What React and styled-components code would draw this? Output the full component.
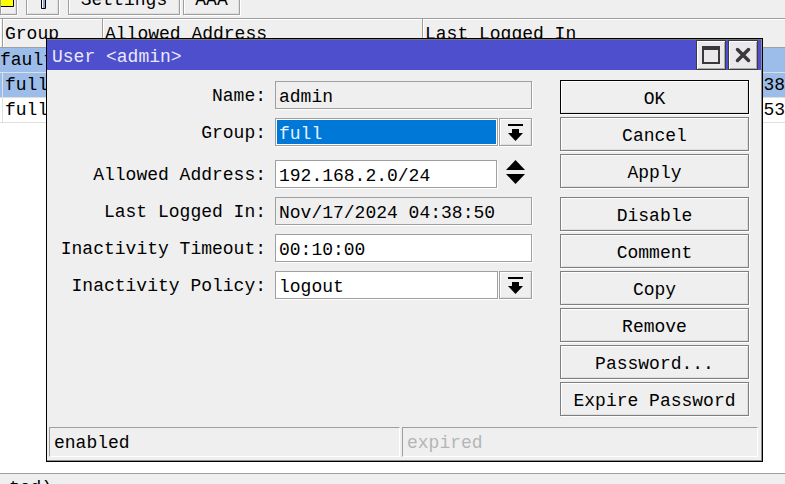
import React from "react";
import styled, { createGlobalStyle, css } from "styled-components";

const GlobalStyle = createGlobalStyle`
  * { box-sizing: border-box; }
  body { margin: 0; background: #fff; }
  body, button, input, select {
    font-family: NSimSun, "Liberation Mono", monospace;
    font-size: 18px;
    line-height: 24px;
    color: #000;
  }
`;

const raised = css`
  background: #efefef;
  border: 1px solid #9f9f9f;
  box-shadow: 1px 1px 0 #fff, inset 1px 1px 0 #fff, inset -1px -1px 0 #dfdfdf;
`;

const Desktop = styled.div`
  position: relative;
  height: 100vh;
  display: flex;
  flex-direction: column;
  overflow: hidden;
`;

const Toolbar = styled.div`
  display: flex;
  flex: none;
  align-items: flex-end;
  gap: 3px;
  height: 18px;
  padding-bottom: 3px;
  overflow: hidden;
  background: #efefef;
`;

const ToolButton = styled.button`
  ${raised}
  display: flex;
  flex: none;
  align-items: center;
  justify-content: center;
  width: ${(p) => p.$width}px;
  height: 34px;
  margin-right: ${(p) => p.$after || 0}px;
  padding: 3px 0 0;
`;

const UserTable = styled.table`
  width: 100%;
  table-layout: fixed;
  border-collapse: separate;
  border-spacing: 0;
  white-space: nowrap;
`;

const HeadCell = styled.th`
  height: 30px;
  padding: 2px 2px 0;
  overflow: hidden;
  text-align: left;
  font-weight: 400;
  background: #efefef;
  border-top: 1px solid #9f9f9f;
  border-bottom: 1px solid #9f9f9f;
  border-right: 1px solid #9f9f9f;
  box-shadow: inset 1px 1px 0 #fff;
  &:last-child { border-right: 0; }
`;

const Row = styled.tr`
  background: ${(p) => (p.$selected ? "#9cbde9" : "#fff")};
`;

const Cell = styled.td`
  height: 25px;
  padding: 0 ${(p) => (p.$end ? 0 : 2)}px;
  overflow: hidden;
  text-align: ${(p) => (p.$end ? "right" : "left")};
  border-bottom: 1px solid #dfdfdf;
  border-right: 1px solid #dfdfdf;
  &:last-child { border-right: 0; }
`;

const NoteCell = styled(Cell)`
  padding: 0;
`;

const TableArea = styled.main`
  flex: 1;
`;

const Footer = styled.footer`
  flex: none;
  height: 11px;
  padding: 2px 0 0 9px;
  overflow: hidden;
  background: #efefef;
  border-top: 1px solid #9f9f9f;
`;

const Dialog = styled.section`
  position: absolute;
  top: 38px;
  left: 46px;
  right: 22px;
  background: #efefef;
  border: 1px solid #000;
  box-shadow: inset -1px -1px 0 #8f8f8f;
`;

const TitleBar = styled.header`
  display: flex;
  align-items: center;
  gap: 2px;
  height: 31px;
  margin-right: 1px;
  padding: 0 3px 0 5px;
  background: #4e4fcd;
  border-top: 1px solid #777;
`;

const Title = styled.h1`
  flex: 1;
  margin: 0;
  padding-top: 4px;
  font-size: 18px;
  font-weight: 400;
  color: #e9e9fb;
`;

const TitleButton = styled.button`
  display: flex;
  align-items: center;
  justify-content: center;
  width: 30px;
  height: 30px;
  padding: 0;
  background: #ebe8eb;
  border: 1px solid #3c3c40;
  box-shadow: inset 1px 1px 0 #fff, inset -1px -1px 0 #aaa;
`;

const Body = styled.div`
  display: flex;
  align-items: flex-start;
  gap: 28px;
  padding: 10px 13px 11px 0;
`;

const Form = styled.form`
  flex: 1;
  min-width: 0;
  display: flex;
  flex-direction: column;
  gap: 9px;
  padding-top: 1px;
`;

const Field = styled.div`
  display: grid;
  grid-template-columns: 219px minmax(0, 1fr);
  column-gap: 9px;
  align-items: center;
  margin-bottom: ${(p) => p.$after || 0}px;
`;

const Label = styled.label`
  padding-top: 3px;
  line-height: 25px;
  text-align: right;
`;

const Controls = styled.div`
  display: flex;
  gap: ${(p) => p.$gap || 1}px;
`;

const box = css`
  flex: 1;
  min-width: 0;
  width: 100%;
  height: 28px;
  margin: 0;
  border: 1px solid #9f9f9f;
  border-radius: 0;
  box-shadow: 1px 1px 0 #fff;
  background: #fff;
  outline: 0;
`;

const TextBox = styled.input`
  ${box}
  padding: 3px 3px 0;
  &:read-only { background: #efefef; }
`;

const DropDown = styled.select`
  ${box}
  appearance: none;
  padding: 3px 3px 0;
  ${(p) =>
    p.$active &&
    css`
      color: #e6f3ff;
      background: #0078d7;
      box-shadow: inset 0 0 0 1px #fff, 1px 1px 0 #fff;
    `}
`;

const ArrowButton = styled.button`
  ${raised}
  display: flex;
  align-items: center;
  justify-content: center;
  width: 33px;
  height: 28px;
  padding: 0;
`;

const Spinner = styled.button`
  display: flex;
  width: 26px;
  height: 24px;
  padding: 0;
  border: 0;
  background: none;
`;

const Actions = styled.div`
  flex: none;
  width: 189px;
  display: flex;
  flex-direction: column;
  gap: 3px;
`;

const ActionButton = styled.button`
  ${raised}
  height: 34px;
  margin-bottom: ${(p) => p.$after || 0}px;
  padding: 3px 0 0;
  border-color: ${(p) => (p.$primary ? "#000" : "#7f7f7f")};
`;

const StatusBar = styled.div`
  display: grid;
  grid-template-columns: 351fr 356fr;
  gap: 2px;
  padding: 0 4px 4px 2px;
`;

const StatusCell = styled.div`
  height: 30px;
  padding: 3px 4px 0;
  color: ${(p) => (p.$muted ? "#b5b5b5" : "#000")};
  border: 1px solid;
  border-color: #9f9f9f #fff #fff #9f9f9f;
`;

const DropIcon = () => (
  <svg width="15" height="17" viewBox="0 0 15 17" aria-hidden="true">
    <path d="M0 0h15v2H0zM4 5h7v4h4L7.5 17 0 9h4z" fill="#000" />
  </svg>
);

const actions = [
  { name: "OK", primary: true },
  { name: "Cancel" },
  { name: "Apply", after: 6 },
  { name: "Disable" },
  { name: "Comment" },
  { name: "Copy" },
  { name: "Remove" },
  { name: "Password..." },
  { name: "Expire Password" },
];

function Select({ id, label, value, options, active }) {
  return (
    <Controls>
      <DropDown id={id} defaultValue={value} $active={active}>
        {options.map((o) => (
          <option key={o}>{o}</option>
        ))}
      </DropDown>
      <ArrowButton type="button" aria-label={label}>
        <DropIcon />
      </ArrowButton>
    </Controls>
  );
}

export default function App() {
  return (
    <Desktop>
      <GlobalStyle />
      <Toolbar>
        <ToolButton $width={17} $after={6} aria-label="Comment">
          <svg width="15" height="30" viewBox="0 0 15 30" aria-hidden="true">
            <path d="M0 4h12.500v17.500H0z" fill="#ff0" />
            <path d="M0 21.500h12.500V4" fill="none" stroke="#000" />
          </svg>
        </ToolButton>
        <ToolButton $width={33} $after={6} aria-label="Filter">
          <svg width="21" height="30" viewBox="0 0 21 30" aria-hidden="true">
            <path d="M1.500 4.500h18l-6 8v11h-4v-11z" fill="#fff" stroke="#000" />
            <path d="M11 12h2v11h-2z" fill="#8ea4df" />
          </svg>
        </ToolButton>
        <ToolButton $width={112}>Settings</ToolButton>
        <ToolButton $width={57}>AAA</ToolButton>
      </Toolbar>
      <TableArea>
        <UserTable>
          <colgroup>
            <col width="3" />
            <col width="100" />
            <col width="320" />
            <col />
          </colgroup>
          <thead>
            <tr>
              <HeadCell aria-hidden="true" />
              <HeadCell>Group</HeadCell>
              <HeadCell>Allowed Address</HeadCell>
              <HeadCell>Last Logged In</HeadCell>
            </tr>
          </thead>
          <tbody>
            <Row $selected>
              <NoteCell colSpan={4}>fault</NoteCell>
            </Row>
            <Row $selected>
              <Cell />
              <Cell>full</Cell>
              <Cell />
              <Cell $end>38</Cell>
            </Row>
            <Row>
              <Cell />
              <Cell>full</Cell>
              <Cell />
              <Cell $end>53</Cell>
            </Row>
          </tbody>
        </UserTable>
      </TableArea>
      <Footer>ted)</Footer>

      <Dialog role="dialog" aria-labelledby="dialog-title">
        <TitleBar>
          <Title id="dialog-title">User &lt;admin&gt;</Title>
          <TitleButton aria-label="Maximize">
            <svg width="18" height="18" viewBox="0 0 18 18" aria-hidden="true">
              <path d="M0 0h18v18H0zM2 4v12h14V4z" fillRule="evenodd" fill="#3a383b" />
            </svg>
          </TitleButton>
          <TitleButton aria-label="Close">
            <svg width="16" height="16" viewBox="0 0 16 16" aria-hidden="true">
              <path
                d="M2.500 2.500l11 11M13.500 2.500l-11 11"
                stroke="#3a383b"
                strokeWidth="3.500"
                strokeLinecap="round"
              />
            </svg>
          </TitleButton>
        </TitleBar>
        <Body>
          <Form>
            <Field>
              <Label htmlFor="name">Name:</Label>
              <TextBox id="name" defaultValue="admin" readOnly />
            </Field>
            <Field $after={5}>
              <Label htmlFor="group">Group:</Label>
              <Select id="group" label="Open group list" value="full" options={["full", "read", "write"]} active />
            </Field>
            <Field>
              <Label htmlFor="address">Allowed Address:</Label>
              <Controls $gap={9}>
                <TextBox id="address" defaultValue="192.168.2.0/24" />
                <Spinner type="button" aria-label="Add or remove address">
                  <svg width="19" height="24" viewBox="0 0 19 24" aria-hidden="true">
                    <path d="M9.500 0L19 10H0zM0 14h19l-9.500 10z" fill="#000" />
                  </svg>
                </Spinner>
              </Controls>
            </Field>
            <Field>
              <Label htmlFor="last">Last Logged In:</Label>
              <TextBox id="last" defaultValue="Nov/17/2024 04:38:50" readOnly />
            </Field>
            <Field>
              <Label htmlFor="timeout">Inactivity Timeout:</Label>
              <TextBox id="timeout" defaultValue="00:10:00" />
            </Field>
            <Field>
              <Label htmlFor="policy">Inactivity Policy:</Label>
              <Select id="policy" label="Open policy list" value="logout" options={["logout", "lockscreen", "none"]} />
            </Field>
          </Form>
          <Actions>
            {actions.map((a) => (
              <ActionButton key={a.name} type="button" $primary={a.primary} $after={a.after}>
                {a.name}
              </ActionButton>
            ))}
          </Actions>
        </Body>
        <StatusBar>
          <StatusCell>enabled</StatusCell>
          <StatusCell $muted>expired</StatusCell>
        </StatusBar>
      </Dialog>
    </Desktop>
  );
}
